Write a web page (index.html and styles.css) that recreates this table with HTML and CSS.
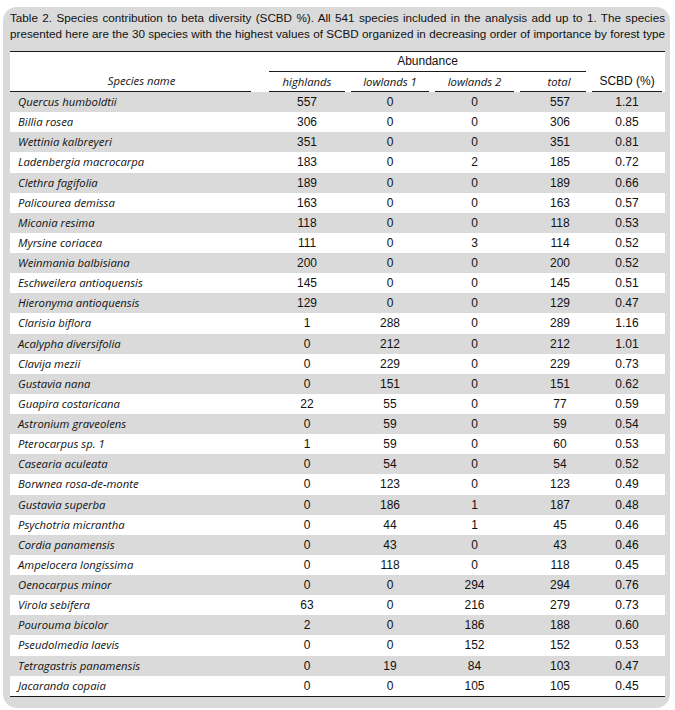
FILE: index.html
```html
<!DOCTYPE html>
<html lang="en">
<head>
<meta charset="utf-8">
<title>Table 2</title>
<link rel="stylesheet" href="styles.css">
</head>
<body>
<div class="card">
  <div class="caption">
    <div class="cap-line">Table 2. Species contribution to beta diversity (SCBD %). All 541 species included in the analysis add up to 1. The species</div>
    <div class="cap-line">presented here are the 30 species with the highest values of SCBD organized in decreasing order of importance by forest type</div>
  </div>
  <table class="data">
    <colgroup>
      <col class="c-name"><col class="c-hl"><col class="c-l1"><col class="c-l2"><col class="c-tot"><col class="c-scbd">
    </colgroup>
    <thead>
      <tr class="head-top">
        <th rowspan="2" class="th-name"><div class="rule name-rule">Species name</div></th>
        <th colspan="4" class="th-group"><div class="rule group-rule">Abundance</div></th>
        <th rowspan="2" class="th-scbd"><div class="rule sub-rule plain">SCBD (%)</div></th>
      </tr>
      <tr class="head-sub">
        <th><div class="rule sub-rule">highlands</div></th>
        <th><div class="rule sub-rule">lowlands 1</div></th>
        <th><div class="rule sub-rule">lowlands 2</div></th>
        <th><div class="rule sub-rule tot-rule">total</div></th>
      </tr>
    </thead>
    <tbody>
      <tr><td>Quercus humboldtii</td><td>557</td><td>0</td><td>0</td><td>557</td><td>1.21</td></tr>
      <tr><td>Billia rosea</td><td>306</td><td>0</td><td>0</td><td>306</td><td>0.85</td></tr>
      <tr><td>Wettinia kalbreyeri</td><td>351</td><td>0</td><td>0</td><td>351</td><td>0.81</td></tr>
      <tr><td>Ladenbergia macrocarpa</td><td>183</td><td>0</td><td>2</td><td>185</td><td>0.72</td></tr>
      <tr><td>Clethra fagifolia</td><td>189</td><td>0</td><td>0</td><td>189</td><td>0.66</td></tr>
      <tr><td>Palicourea demissa</td><td>163</td><td>0</td><td>0</td><td>163</td><td>0.57</td></tr>
      <tr><td>Miconia resima</td><td>118</td><td>0</td><td>0</td><td>118</td><td>0.53</td></tr>
      <tr><td>Myrsine coriacea</td><td>111</td><td>0</td><td>3</td><td>114</td><td>0.52</td></tr>
      <tr><td>Weinmania balbisiana</td><td>200</td><td>0</td><td>0</td><td>200</td><td>0.52</td></tr>
      <tr><td>Eschweilera antioquensis</td><td>145</td><td>0</td><td>0</td><td>145</td><td>0.51</td></tr>
      <tr><td>Hieronyma antioquensis</td><td>129</td><td>0</td><td>0</td><td>129</td><td>0.47</td></tr>
      <tr><td>Clarisia biflora</td><td>1</td><td>288</td><td>0</td><td>289</td><td>1.16</td></tr>
      <tr><td>Acalypha diversifolia</td><td>0</td><td>212</td><td>0</td><td>212</td><td>1.01</td></tr>
      <tr><td>Clavija mezii</td><td>0</td><td>229</td><td>0</td><td>229</td><td>0.73</td></tr>
      <tr><td>Gustavia nana</td><td>0</td><td>151</td><td>0</td><td>151</td><td>0.62</td></tr>
      <tr><td>Guapira costaricana</td><td>22</td><td>55</td><td>0</td><td>77</td><td>0.59</td></tr>
      <tr><td>Astronium graveolens</td><td>0</td><td>59</td><td>0</td><td>59</td><td>0.54</td></tr>
      <tr><td>Pterocarpus sp. 1</td><td>1</td><td>59</td><td>0</td><td>60</td><td>0.53</td></tr>
      <tr><td>Casearia aculeata</td><td>0</td><td>54</td><td>0</td><td>54</td><td>0.52</td></tr>
      <tr><td>Borwnea rosa-de-monte</td><td>0</td><td>123</td><td>0</td><td>123</td><td>0.49</td></tr>
      <tr><td>Gustavia superba</td><td>0</td><td>186</td><td>1</td><td>187</td><td>0.48</td></tr>
      <tr><td>Psychotria micrantha</td><td>0</td><td>44</td><td>1</td><td>45</td><td>0.46</td></tr>
      <tr><td>Cordia panamensis</td><td>0</td><td>43</td><td>0</td><td>43</td><td>0.46</td></tr>
      <tr><td>Ampelocera longissima</td><td>0</td><td>118</td><td>0</td><td>118</td><td>0.45</td></tr>
      <tr><td>Oenocarpus minor</td><td>0</td><td>0</td><td>294</td><td>294</td><td>0.76</td></tr>
      <tr><td>Virola sebifera</td><td>63</td><td>0</td><td>216</td><td>279</td><td>0.73</td></tr>
      <tr><td>Pourouma bicolor</td><td>2</td><td>0</td><td>186</td><td>188</td><td>0.60</td></tr>
      <tr><td>Pseudolmedia laevis</td><td>0</td><td>0</td><td>152</td><td>152</td><td>0.53</td></tr>
      <tr><td>Tetragastris panamensis</td><td>0</td><td>19</td><td>84</td><td>103</td><td>0.47</td></tr>
      <tr><td>Jacaranda copaia</td><td>0</td><td>0</td><td>105</td><td>105</td><td>0.45</td></tr>
    </tbody>
  </table>
</div>
</body>
</html>
```
FILE: styles.css
```css
html, body {
  margin: 0;
  padding: 0;
  background: #ffffff;
}

body {
  font-family: "Liberation Sans", Arial, sans-serif;
  color: #111111;
}

.card {
  margin: 7px 5px 0 3px;
  width: 655px;
  height: 698px;
  padding: 3px 5px 0 7px;
  background: #dadada;
  border-radius: 14px;
}

.caption {
  font-size: 11.7px;
  line-height: 16px;
  margin-bottom: 9px;
}

.cap-line {
  white-space: nowrap;
  text-align: justify;
  text-align-last: justify;
}

.data {
  width: 655px;
  table-layout: fixed;
  border-collapse: collapse;
  background: #ffffff;
  font-size: 12px;
  border-top: 1px solid #1a1a1a;
  border-bottom: 1px solid #1a1a1a;
}

.c-name { width: 256px; }
.c-hl { width: 82px; }
.c-l1 { width: 84px; }
.c-l2 { width: 85px; }
.c-tot { width: 72px; }
.c-scbd { width: 76px; }

.data th {
  padding: 0;
  font-weight: normal;
  font-style: italic;
  vertical-align: bottom;
  text-align: center;
}

.rule {
  border-bottom: 1px solid #1a1a1a;
}

.head-top th {
  height: 20px;
}

.head-sub th {
  height: 20px;
}

.group-rule {
  font-style: normal;
  line-height: 19px;
  margin: 0 3px;
}

.name-rule {
  margin-right: 15px;
  padding-left: 22px;
  line-height: 20px;
  font-family: "Open Sans", "Liberation Sans", sans-serif;
  font-size: 11.3px;
}

.sub-rule {
  line-height: 19px;
  margin: 0 3px;
  font-family: "Open Sans", "Liberation Sans", sans-serif;
  font-size: 11.3px;
}

.tot-rule {
  padding-left: 12px;
}

.plain {
  font-style: normal;
  font-family: "Liberation Sans", Arial, sans-serif;
  font-size: 12px;
}

.data td {
  height: 20.13px;
  padding: 0;
  text-align: center;
  line-height: 20px;
}

.data td:first-child {
  text-align: left;
  padding-left: 8px;
  font-style: italic;
  font-family: "Open Sans", "Liberation Sans", sans-serif;
  font-size: 11.3px;
}

.data td:nth-child(5) {
  padding-left: 14px;
}

.data tbody tr:nth-child(odd) {
  background: #dadada;
}
```
